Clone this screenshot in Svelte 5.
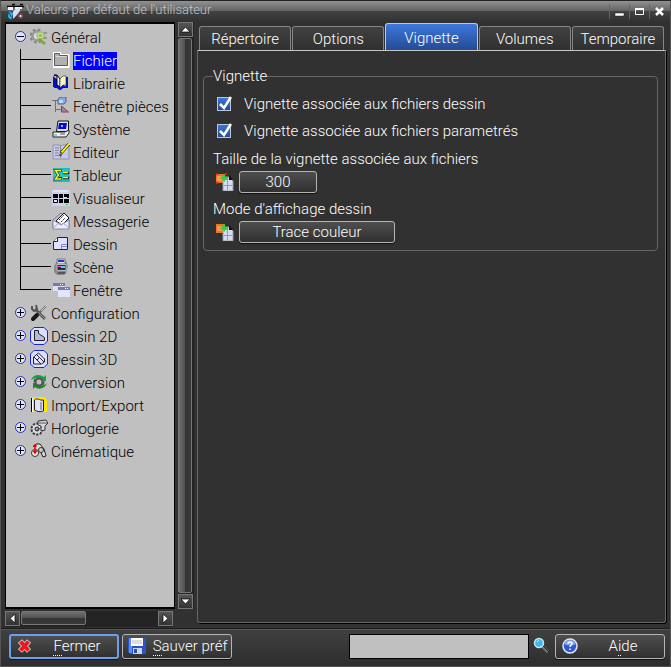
<script lang="ts">
  interface Item {
    label: string;
    icon: string;
  }

  const children: Item[] = [
    { label: 'Fichier', icon: 'folder' },
    { label: 'Librairie', icon: 'book' },
    { label: 'Fenêtre pièces', icon: 'parts' },
    { label: 'Système', icon: 'computer' },
    { label: 'Editeur', icon: 'editor' },
    { label: 'Tableur', icon: 'sigma' },
    { label: 'Visualiseur', icon: 'viewer' },
    { label: 'Messagerie', icon: 'mail' },
    { label: 'Dessin', icon: 'drawing' },
    { label: 'Scène', icon: 'scene' },
    { label: 'Fenêtre', icon: 'windows' }
  ];

  const sections: Item[] = [
    { label: 'Configuration', icon: 'tools' },
    { label: 'Dessin 2D', icon: 'shape2d' },
    { label: 'Dessin 3D', icon: 'shape3d' },
    { label: 'Conversion', icon: 'convert' },
    { label: 'Import/Export', icon: 'export' },
    { label: 'Horlogerie', icon: 'clockwork' },
    { label: 'Cinématique', icon: 'kinematics' }
  ];

  const tabs = ['Répertoire', 'Options', 'Vignette', 'Volumes', 'Temporaire'];

  let selected = $state('Fichier');
  let activeTab = $state('Vignette');
  let open = $state(true);
  let search = $state('');
  let drawingThumb = $state(true);
  let paramThumb = $state(true);
</script>

{#snippet icon(name: string)}
  <svg class="icon" width="18" height="18" viewBox="0 0 18 18" aria-hidden="true">
    {#if name === 'gear'}
      <circle cx="7" cy="8" r="6" fill="none" stroke="#858585" stroke-width="3" stroke-dasharray="2.6 2.1" />
      <circle cx="7" cy="8" r="4.5" fill="none" stroke="#999" stroke-width="2.5" />
      <circle cx="7" cy="8" r="3" fill="#ddd" />
      <circle cx="10.5" cy="7.5" r="3.5" fill="#d9e8bd" stroke="#a5b98a" stroke-width="1.5" />
      <circle cx="10.5" cy="7.5" r="2" fill="#8ed010" />
      <path d="M9 11l6 5" stroke="#7aa838" stroke-width="2.5" fill="none" />
      <path d="M14 5h3M14 10h3" stroke="#8f9b82" stroke-width="2" />
    {:else if name === 'folder'}
      <path d="M1 1h8v2h8.500v14H1z" fill="#fff" />
      <path d="M2.500 2.500H7.500V4.500H15.500V14.500H2.500z" fill="#b0b0b0" stroke="#5c5c5c" />
      <path d="M4 5.500h10.500" stroke="#d8d8d8" />
    {:else if name === 'book'}
      <path d="M1 2v11h3l4 3 3-2h5V3h-2v10" fill="#0010d8" />
      <path d="M2 1l3 1v9l3 2V5L5 1z" fill="#fff" stroke="#000" />
      <path d="M8 5l3-3h3v9h-3l-3 3z" fill="#ffffd5" stroke="#333" stroke-width=".7" />
      <path d="M2 13h3l3 2 3-2h4" stroke="#0010d8" stroke-width="2" fill="none" />
      <path d="M10 5v6M12 4v6" stroke="#eee36b" stroke-dasharray="1 1" />
    {:else if name === 'parts'}
      <path d="M0 3.500h6M3.500 3.500v11.500M3.500 12.500h6" stroke="#707070" fill="none" />
      <path d="M6 2l2-2h6v5l-2 2H6z" fill="#7eabe8" stroke="#53648d" />
      <path d="M7 3h4v3H7z" fill="#b9daf6" />
      <path d="M9.500 9l7 6h-7z" fill="#8b8eb1" stroke="#9c3c50" />
    {:else if name === 'computer'}
      <path d="M6 1h10.500v9.500l-2 1H4.500z" fill="#dedff6" stroke="#111" />
      <path d="M7 3h8l-1 6H6z" fill="#0808dd" />
      <path d="M9 5h2v2H9z" fill="#8fbbff" />
      <path d="M1 12h12l4-2v3l-3 4H1z" fill="#edeefe" stroke="#222" />
      <path d="M2 15h3" stroke="#2ac653" />
      <path d="M8 14h5" stroke="#555" />
    {:else if name === 'editor'}
      <path d="M1 2h7l1 1 1-1h7v14H1z" fill="#c6c8e4" stroke="#9193b0" />
      <path d="M8.500 3v12M3 5h4M3 7.500h4M3 10h4M3 12.500h4" stroke="#8185a0" fill="none" />
      <path d="M9 10l8-9" stroke="#000" stroke-width="3" />
      <path d="M9.500 9.500l8-9" stroke="#fff400" stroke-width="2" />
      <path d="M7 12h3" stroke="#111" />
    {:else if name === 'sigma'}
      <path d="M1 2h17v14H1z" fill="#20bdbc" />
      <path d="M1 5h17M1 9h17M1 13h17" stroke="#56d5cf" stroke-dasharray="1 1" />
      <path d="M8.500 6V4.500H3.500L6.500 9l-3 4H8.500V11" fill="none" stroke="#202020" stroke-width="2.600" />
      <path d="M8.500 5.500V4.500H3.500L6.500 9l-3 4H8.500v-1" fill="none" stroke="#fff425" stroke-width="1.500" />
      <path d="M11 7h6M11 12h6" stroke="#222" stroke-width="2.500" />
      <path d="M11 6.500h5M11 11.500h5" stroke="#fff425" stroke-width="1.500" />
    {:else if name === 'viewer'}
      <path d="M0 1h18v16H0z" fill="#cdd0eb" />
      <path d="M1 2h15" stroke="#f2f4ff" />
      <path d="M1 5h5v4H1zM7 5h4v4H7zM12 5h5v4h-5zM7 10h4v4H7zM12 10h5v4h-5z" fill="#000" />
      <path d="M1.500 10.500h4v3h-4z" fill="#e7e7ff" stroke="#000" />
      <path d="M12 8.500h3" stroke="#e9df51" />
      <path d="M14 15.500h2" stroke="#36c65d" />
    {:else if name === 'mail'}
      <path d="M1 8l8-7 8 7v8H1z" fill="#bfc2dd" stroke="#777993" />
      <path d="M4 9l8-8 5 5-7 7z" fill="#fff" stroke="#111" />
      <path d="M7 8l5-5M9 10l4-4" stroke="#222" stroke-dasharray="2 1" />
      <path d="M1 8l8 5 8-5v9H1z" fill="#ecedff" stroke="#888aaa" />
      <path d="M1 16l6-5 3 2 1-2 6 5" stroke="#a2a4c2" fill="none" />
    {:else if name === 'drawing'}
      <path d="M5.500 2.500h10v12h-14v-8z" fill="#dfe1ff" stroke="#222" />
      <path d="M1.500 6.500h4v-4" fill="#fff" stroke="#222" />
      <path d="M9.500 14V9.500H15M9.500 11.500H15" stroke="#858cc8" fill="none" />
    {:else if name === 'scene'}
      <path d="M2 8l3-5h9l2 5-2 8-3 1H5l-3-3z" fill="#898989" />
      <path d="M5 1h8v5H5z" fill="#d5e0ef" stroke="#777" />
      <path d="M6 3h6" stroke="#2737b8" stroke-width="2" />
      <path d="M5 6.500h9v6H5z" fill="#252d43" stroke="#b9b9b9" />
      <path d="M6 8.500h3" stroke="#ed63c8" /><path d="M9 9h4" stroke="#48d1ff" stroke-width="2" />
      <path d="M6 15h7" stroke="#555" stroke-width="2" />
    {:else if name === 'windows'}
      <path d="M1 2h12v8H1z" fill="#dcdffa" /><path d="M1 2h12v3H1z" fill="#777c9e" />
      <path d="M6 7h12v9H6z" fill="#e3e4ff" /><path d="M6 6h12v3H6z" fill="#787d9f" />
      <path d="M8 3.500h1M10 3.500h1M13 7.500h1M15 7.500h1" stroke="#fff" />
    {:else if name === 'tools'}
      <path d="M16 2L8 10" stroke="#666" stroke-width="2" />
      <path d="M5 5l10 10" stroke="#555" stroke-width="3" />
      <path d="M2 2v3l2 2 3-2-1-4" fill="none" stroke="#555" stroke-width="2" />
      <path d="M8 8l7 7" stroke="#999" /><path d="M17 1l-6 6" stroke="#d6d6d6" />
      <path d="M7 11l-4 4" stroke="#171717" stroke-width="4" stroke-linecap="round" />
    {:else if name === 'shape2d' || name === 'shape3d'}
      <path d="M4 .500h10l3.500 3.500v10L14 17.500H4L.500 14V4z" fill="#dce0ff" stroke="#1725df" />
      {#if name === 'shape2d'}
        <path d="M4.500 3.500h4v3l6 4v3h-10z" fill="#b8badb" stroke="#222" />
      {:else}
        <path d="M3.500 7l5-4 6 6v3l-3 2h-8z" fill="#e3e4ff" stroke="#222" />
        <path d="M4 7l7 7M7 5l7 7M7 10l3-3" fill="none" stroke="#222" />
      {/if}
    {:else if name === 'convert'}
      <circle cx="9" cy="9" r="4" fill="none" stroke="#444" stroke-width="3" stroke-dasharray="3 1" />
      <path d="M1 7C3 1 10 1 14 4l2-2v6h-6l2-2C8 4 4 5 1 7z" fill="#16a33b" />
      <path d="M17 10c-2 6-9 7-12 4l-2 2v-6h5l-2 2c4 2 8 1 11-2z" fill="#16882f" />
      <circle cx="9" cy="9" r="3.500" fill="#c0c0c0" stroke="#555" stroke-width="2" />
    {:else if name === 'export'}
      <path d="M3 1h11l3 3v12H3z" fill="#ffe600" />
      <path d="M1.500 2v14" stroke="#000" /><path d="M2.500 2v14" stroke="#fff" />
      <path d="M4.500 4c3-3 5 1 9 0v11c-3 1-6 1-9-1z" fill="#dfe0fb" stroke="#222" />
      <path d="M10 6h2v8h-2z" fill="#9d9fbe" />
    {:else if name === 'clockwork'}
      <circle cx="7" cy="10" r="5" fill="#eee" stroke="#333" stroke-width="3" stroke-dasharray="2 1.200" />
      <circle cx="7" cy="10" r="4.500" fill="#d9d9e2" />
      <circle cx="7" cy="10" r="2" fill="#aaa" stroke="#222" />
      <path d="M8 2l8-1 2 3-3 3v4l-4 1V7L8 6z" fill="#d5d6e2" stroke="#333" />
      <path d="M9 4h8M7 11l5-3" stroke="#555" />
    {:else if name === 'kinematics'}
      <path d="M3 5l3-3h4l4 5 2 7-3 1-3-7" fill="#ddd" stroke="#222" />
      <circle cx="5" cy="11" r="3.500" fill="#eee" stroke="#333" />
      <circle cx="11" cy="8" r="2.500" fill="#ccc" stroke="#333" />
      <path d="M5 3v7M3.500 4.500L5 3l1.500 1.500M3.500 9L5 11l1.500-2" stroke="#e00" stroke-width="1.500" fill="none" />
    {:else if name === 'transfer' || name === 'transferBox'}
      <path d="M0 1h9v9H0z" fill="#ed7625" /><path d="M1 3h6v5H1z" fill="#f99a4b" />
      <path d="M7 4h6l4 4v10H7z" fill="#d8dcf0" stroke="#999" />
      <path d="M13 2v5h4z" fill="#111" />
      <path d="M12 4H9V1L4 5l5 4V7h3z" fill="#31d243" />
      <path d="M11.500 7v10M8 12.500h8" stroke="#78b488" />
      {#if name === 'transferBox'}
        <path d="M0 0h2v2H0zM9 0h2v2H9zM0 9h2v2H0z" fill="#ed1717" />
      {/if}
    {:else if name === 'close'}
      <path d="M4 4l9 10M13 4L4 14" stroke="#ddd" stroke-width="5.500" />
      <path d="M4.500 4.500l8 9M12.500 4.500l-8 9" stroke="#ed171d" stroke-width="4" />
    {:else if name === 'save'}
      <path d="M0 1h18v16H2l-2-2z" fill="#2853c9" />
      <path d="M1 1h3v15H1z" fill="#5b91ed" />
      <path d="M3 1h12v8H3z" fill="#fff" /><path d="M4 4h10M4 6h10" stroke="#bbb" />
      <path d="M5 11h9v6H5z" fill="#c8d4e8" /><path d="M6 12h3v4H6z" fill="#2b529e" />
    {:else if name === 'search'}
      <path d="M9 9l6 6" stroke="#777" stroke-width="3" /><path d="M10 9l6 6" stroke="#222" />
      <circle cx="6" cy="6" r="4.500" fill="#3fb8ed" stroke="#c2e7f6" stroke-width="1.500" />
      <path d="M4 5l2-2" stroke="#c9f3ff" />
    {:else if name === 'help'}
      <circle cx="9" cy="9" r="7" fill="#3157d2" stroke="#e3e8ff" stroke-width="1.500" />
      <path d="M3 7a6.500 6.500 0 0 1 12 0q-6 3-12 0" fill="#7da2f3" />
      <path d="M7 7c0-3 4-2.500 4-.500 0 1.500-2 1.500-2 3.500M9 11.500v1.500" fill="none" stroke="#fff" stroke-width="1.500" />
    {:else if name === 'app'}
      <path d="M0 3.500h17M5 1.500h3M13 1.500h3" stroke="#000" stroke-width="1.500" />
      <path d="M1 4h5v3H1zM8 4h7v2H8z" fill="#f4f4ff" />
      <path d="M7 7l6-3v4l-4 5-3 3V9z" fill="#d7defa" />
      <path d="M2 8l4 2-2 7-3-3z" fill="#21bfe9" />
      <path d="M2 9l2 5" stroke="#1449bf" />
      <circle cx="13.500" cy="13" r="2.500" fill="#b53035" stroke="#555" /><circle cx="13.500" cy="13" r="1" fill="#fff" />
    {/if}
  </svg>
{/snippet}

{#snippet toggle(expanded: boolean)}
  <svg width="13" height="13" viewBox="0 0 13 13" aria-hidden="true">
    <circle cx="5.500" cy="6.500" r="5" fill="#e1e4ff" stroke="#2831ae" />
    <path d="M2 6.500h7" stroke="#000" />
    {#if !expanded}<path d="M5.500 3v7" stroke="#000" />{/if}
  </svg>
{/snippet}

{#snippet arrow(path: string)}
  <svg width="9" height="9" viewBox="0 0 9 9" aria-hidden="true"><path d={path} fill="#fff" stroke="#000" stroke-width=".700" /></svg>
{/snippet}

<div class="window">
  <header class="titlebar">
    {@render icon('app')}
    <h1>Valeurs par défaut de l'utilisateur</h1>
    <div class="window-buttons">
      <button aria-label="Réduire"><svg width="13" height="13" viewBox="0 0 13 13"><path d="M2 8h9v3H2z" fill="#fff" stroke="#222" stroke-width=".500" /></svg></button>
      <button aria-label="Agrandir"><svg width="13" height="13" viewBox="0 0 13 13"><path d="M2.500 3.500h8v6h-8z" fill="none" stroke="#fff" /><path d="M2 4h9" stroke="#fff" stroke-width="2" /></svg></button>
      <button aria-label="Fermer la fenêtre"><svg width="13" height="13" viewBox="0 0 13 13"><path d="M3 3l7 7M10 3l-7 7" stroke="#fff" stroke-width="2.500" /></svg></button>
    </div>
  </header>

  <main>
    <div class="sidebar">
      <nav class="tree" aria-label="Catégories">
        <ul>
          <li>
            <div class="row">
              <button class="toggle" aria-label="Plier Général" onclick={() => (open = !open)}>{@render toggle(open)}</button>
              {@render icon('gear')}
              <button class="node" onclick={() => (selected = 'Général')}><span class:selected={selected === 'Général'}>Général</span></button>
            </div>
            {#if open}
              <ul class="children">
                {#each children as item}
                  <li class="row">
                    <span class="branch"></span>
                    {@render icon(item.icon)}
                    <button class="node" onclick={() => (selected = item.label)}><span class:selected={selected === item.label}>{item.label}</span></button>
                  </li>
                {/each}
              </ul>
            {/if}
          </li>
          {#each sections as item}
            <li class="row">
              <button class="toggle" aria-label="Déplier {item.label}">{@render toggle(false)}</button>
              {@render icon(item.icon)}
              <button class="node" onclick={() => (selected = item.label)}><span class:selected={selected === item.label}>{item.label}</span></button>
            </li>
          {/each}
        </ul>
      </nav>
      <div class="scrollbar vertical">
        <button aria-label="Monter">{@render arrow('M0 7l4.500-5L9 7z')}</button>
        <div class="thumb"></div>
        <button aria-label="Descendre">{@render arrow('M0 2l4.500 5L9 2z')}</button>
      </div>
      <div class="scrollbar horizontal">
        <button aria-label="Gauche">{@render arrow('M7 0L2 4.500 7 9z')}</button>
        <div class="track"><div class="thumb"></div></div>
        <button aria-label="Droite">{@render arrow('M2 0l5 4.500L2 9z')}</button>
      </div>
    </div>

    <div class="content">
      <div class="tabs" role="tablist">
        {#each tabs as tab}
          <button role="tab" aria-selected={activeTab === tab} class:active={activeTab === tab} onclick={() => (activeTab = tab)}>{tab}</button>
        {/each}
      </div>
      <section class="panel" role="tabpanel">
        <fieldset>
          <legend>Vignette</legend>
          <label class="check">
            <span class="box">
              <input type="checkbox" bind:checked={drawingThumb} />
              <svg width="15" height="15" viewBox="0 0 15 15" aria-hidden="true"><path d="M3 8l4 4 7-11" fill="none" stroke="#fff" stroke-width="2.500" /></svg>
            </span>
            Vignette associée aux fichiers dessin
          </label>
          <label class="check">
            <span class="box">
              <input type="checkbox" bind:checked={paramThumb} />
              <svg width="15" height="15" viewBox="0 0 15 15" aria-hidden="true"><path d="M3 8l4 4 7-11" fill="none" stroke="#fff" stroke-width="2.500" /></svg>
            </span>
            Vignette associée aux fichiers parametrés
          </label>
          <p id="size-label">Taille de la vignette associée aux fichiers</p>
          <div class="choice">
            {@render icon('transferBox')}
            <button class="btn size" aria-describedby="size-label">300</button>
          </div>
          <p id="mode-label">Mode d'affichage dessin</p>
          <div class="choice">
            {@render icon('transfer')}
            <button class="btn mode" aria-describedby="mode-label">Trace couleur</button>
          </div>
        </fieldset>
      </section>
    </div>
  </main>

  <footer>
    <button class="btn action default">{@render icon('close')}<span class="text"><span class="key">F</span>ermer</span></button>
    <button class="btn action">{@render icon('save')}<span class="text"><span class="key">S</span>auver préf</span></button>
    <div class="search">
      <input type="text" aria-label="Rechercher" bind:value={search} />
      {@render icon('search')}
    </div>
    <button class="btn action">{@render icon('help')}<span class="text">A<span class="key">i</span>de</span></button>
  </footer>
</div>

<style>
  :global(body) {
    background: #313131;
  }
  .window {
    box-sizing: border-box;
    min-height: 100vh;
    display: flex;
    flex-direction: column;
    border: 1px solid #555;
    border-top-color: #222;
    background: #313131;
    color: #fff;
    font: 300 15px/18px Roboto, "Liberation Sans", Arial, sans-serif;
  }
  .window * {
    box-sizing: border-box;
  }
  button {
    font: inherit;
    color: inherit;
    padding: 0;
    border: 0;
    background: none;
  }
  ul {
    list-style: none;
    margin: 0;
    padding: 0;
  }
  svg {
    display: block;
    flex: none;
  }

  .titlebar {
    display: flex;
    align-items: center;
    height: 21px;
    padding: 0 1px 0 6px;
    background: linear-gradient(#929292 0, #626262 10px, #434343 10px, #313131);
    color: #c4c4c4;
  }
  .titlebar h1 {
    flex: 1;
    margin: 0 0 3px 1px;
    font-size: 13px;
    line-height: 18px;
    font-weight: inherit;
  }
  .window-buttons {
    display: flex;
  }
  .window-buttons button {
    width: 20px;
    height: 15px;
    display: grid;
    place-items: center;
    border-left: 1px solid #666;
  }

  main {
    flex: 1;
    display: flex;
    gap: 3px;
    padding: 0 4px 2px;
  }
  .sidebar {
    display: grid;
    grid-template: 1fr 16px / 170px 16px;
    gap: 2px 3px;
  }
  .tree {
    padding: 2px 0 0 9px;
    border: 1px solid #000;
    border-width: 2px 1px;
    background: #c0c0c0;
    color: #000;
    overflow: hidden;
  }
  .row {
    display: flex;
    align-items: center;
    height: 23px;
    white-space: nowrap;
  }
  .toggle {
    width: 15px;
    padding-bottom: 2px;
    cursor: pointer;
  }
  .row > :global(.icon) {
    margin-bottom: 1px;
  }
  .node {
    margin-left: 3px;
  }
  .selected {
    background: #0000ff;
    color: #fff;
  }
  .children {
    margin-left: 5px;
  }
  .branch {
    align-self: stretch;
    width: 31px;
    margin-right: 1px;
    background:
      linear-gradient(#000, #000) 0 0 / 1px 100% no-repeat,
      linear-gradient(#000, #000) 0 10px / 100% 1px no-repeat;
  }
  .row:last-child .branch {
    background-size: 1px 10px, 100% 1px;
  }

  .scrollbar {
    display: flex;
    background: #242424;
  }
  .vertical {
    flex-direction: column;
  }
  .horizontal {
    width: 168px;
  }
  .scrollbar button {
    flex: none;
    width: 15px;
    height: 15px;
    display: grid;
    place-items: center;
    border: 1px solid #777;
    background: linear-gradient(#555, #333);
  }
  .thumb {
    border: 1px solid #777;
    border-radius: 2px;
  }
  .vertical .thumb {
    flex: 1;
    width: 14px;
    margin: 1px 0;
    background: linear-gradient(90deg, #707070, #505050 50%, #343434 50%, #383838);
  }
  .track {
    flex: 1;
    padding-left: 1px;
  }
  .horizontal .thumb {
    width: 65px;
    height: 14px;
    background: linear-gradient(#707070, #505050 50%, #343434 50%, #383838);
  }

  .content {
    flex: 1;
    min-width: 0;
    display: flex;
    flex-direction: column;
  }
  .tabs {
    display: flex;
    align-items: flex-end;
    gap: 1px;
    height: 28px;
    padding: 0 2px;
  }
  .tabs button {
    flex: 1;
    height: 24px;
    border: 1px solid #858585;
    border-bottom: 0;
    border-radius: 3px 3px 0 0;
    background: linear-gradient(#414141, #303030);
  }
  .tabs .active {
    height: 28px;
    margin-bottom: -1px;
    border-color: #bfc9dc;
    background: linear-gradient(#3d78dd, #234991);
  }
  .panel {
    flex: 1;
    padding: 16px 7px 8px 5px;
    border: 1px solid #666;
    border-top-color: #c5c5c5;
    border-radius: 0 0 3px 3px;
    box-shadow: 1px 1px #000;
    margin-bottom: 4px;
  }
  fieldset {
    margin: 0;
    padding: 5px 8px 7px 9px;
    border: 1px solid #666;
    border-radius: 4px;
  }
  legend {
    padding: 0;
  }
  .check {
    display: flex;
    align-items: center;
    gap: 12px;
    height: 27px;
    padding-left: 4px;
  }
  .box {
    display: grid;
  }
  .box > * {
    grid-area: 1 / 1;
  }
  .box input {
    appearance: none;
    width: 14px;
    height: 14px;
    margin: 1px 0 0;
    border: 1px solid #b9c7de;
    background: #303030;
  }
  .box input:checked {
    background: linear-gradient(#3b76dc, #244b92);
  }
  .box svg {
    pointer-events: none;
  }
  .box input:not(:checked) + svg {
    visibility: hidden;
  }
  fieldset p {
    margin: 6px 0 3px;
  }
  .choice {
    display: flex;
    align-items: center;
    gap: 5px;
    margin-bottom: 7px;
    padding-left: 3px;
  }
  .choice + p {
    margin-top: 0;
  }
  .choice:last-child {
    margin-bottom: 0;
  }
  .btn {
    height: 22px;
    border: 1px solid #b5b5b5;
    border-radius: 3px;
    background: linear-gradient(#4e4e4e, #303030);
    box-shadow: 0 1px #111;
  }
  .size {
    width: 78px;
  }
  .mode {
    width: 156px;
  }

  footer {
    display: flex;
    align-items: center;
    gap: 3px;
    height: 37px;
    padding: 0 5px 4px 8px;
    border-top: 1px solid #555;
    background: linear-gradient(#404040, #2e2e2e);
    box-shadow: 0 -1px #1b1b1b;
  }
  .action {
    display: flex;
    align-items: center;
    gap: 6px;
    width: 110px;
    height: 25px;
    padding: 0 3px 0 5px;
  }
  .action .text {
    flex: 1;
    white-space: nowrap;
  }
  .default {
    border: 2px solid #6d9ff0;
  }
  .key {
    border-bottom: 1px dotted #fff;
  }
  .search {
    flex: 1;
    display: flex;
    justify-content: flex-end;
    align-items: center;
    gap: 4px;
    margin-right: 1px;
  }
  .search input {
    width: 180px;
    height: 25px;
    padding: 0 4px;
    border: 1px solid #000;
    background: #c0c0c0;
    color: #000;
    font: inherit;
  }
</style>
